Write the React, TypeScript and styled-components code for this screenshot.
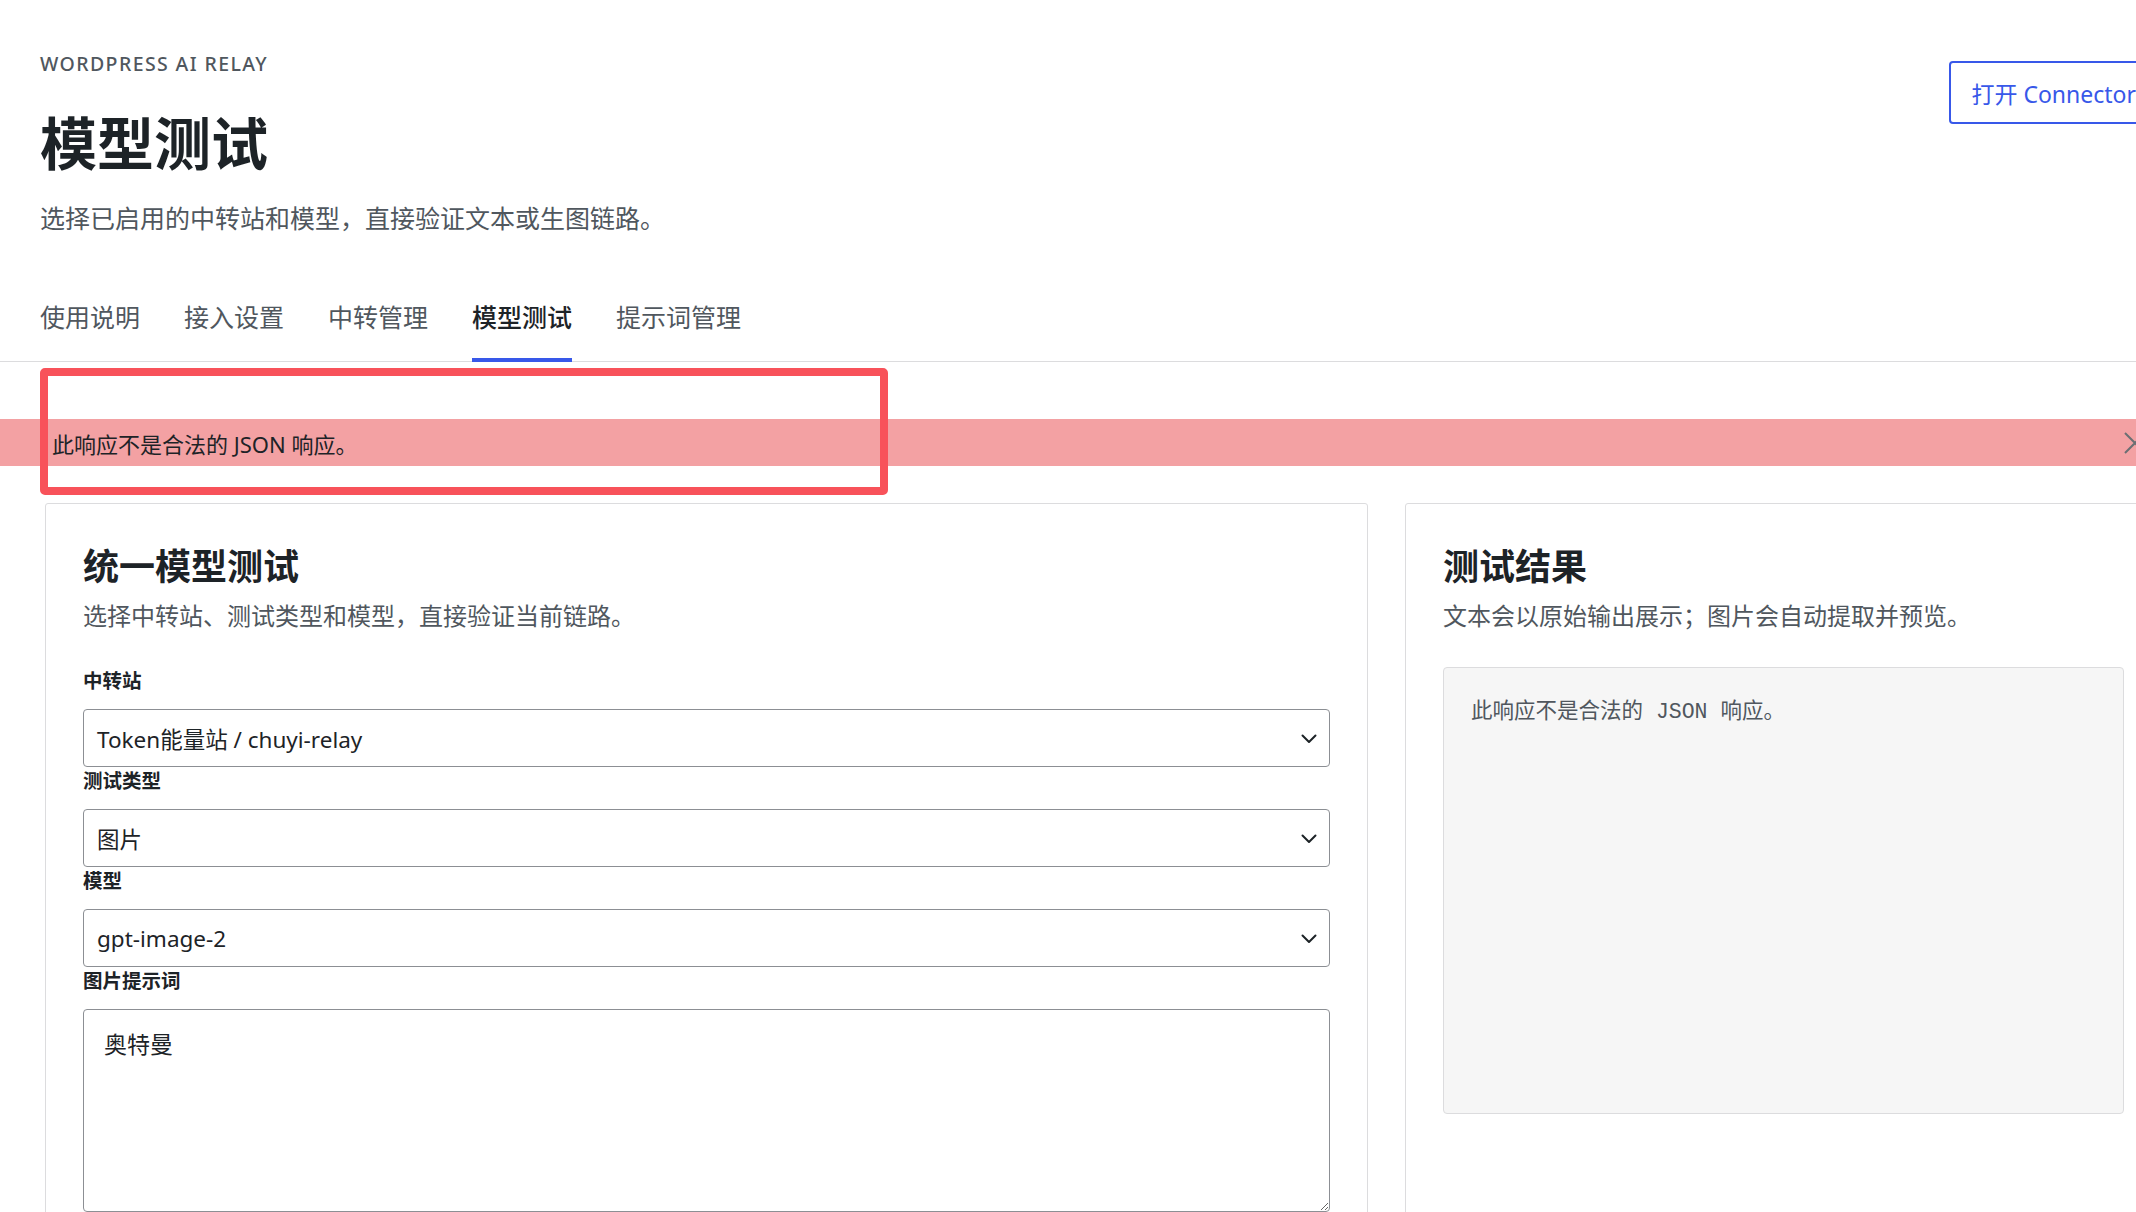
import React from "react";
import styled, { createGlobalStyle } from "styled-components";

const GlobalStyle = createGlobalStyle`
  html, body {
    margin: 0;
    padding: 0;
    background: #ffffff;
    overflow: hidden;
  }
  body {
    font-family: "Noto Sans", "Noto Sans CJK SC", sans-serif;
    color: #1d2327;
  }
  * {
    box-sizing: border-box;
  }
`;

const Page = styled.div`
  position: relative;
  width: 2200px;
  min-height: 1212px;
`;

const Header = styled.header`
  display: flex;
  justify-content: space-between;
  align-items: flex-start;
  padding: 52px 42px 0 40px;
`;

const HeaderText = styled.div`
  display: flex;
  flex-direction: column;
`;

const Eyebrow = styled.div`
  font-size: 19.5px;
  line-height: 24px;
  letter-spacing: 1.4px;
  font-weight: 500;
  color: #50575e;
  text-transform: uppercase;
`;

const Title = styled.h1`
  margin: 30px 0 0;
  font-family: "Noto Sans CJK SC", sans-serif;
  font-size: 57px;
  line-height: 68px;
  font-weight: 700;
  color: #1d2327;
`;

const Subtitle = styled.p`
  margin: 26px 0 0;
  font-size: 25px;
  line-height: 36px;
  color: #50575e;
`;

const OutlineButton = styled.button`
  margin-top: 9px;
  height: 63px;
  padding: 0 20px;
  background: #ffffff;
  border: 2px solid #3858e9;
  border-radius: 4px;
  color: #3858e9;
  font-family: "Noto Sans", "Noto Sans CJK SC", sans-serif;
  font-size: 23px;
  white-space: nowrap;
  cursor: pointer;
`;

const Tabs = styled.nav`
  display: flex;
  gap: 44px;
  margin-top: 64px;
  padding-left: 40px;
  border-bottom: 1px solid #dcdcde;
`;

const Tab = styled.a<{ active?: boolean }>`
  display: block;
  padding-bottom: 24px;
  font-size: 25px;
  line-height: 34px;
  color: ${(props) => (props.active ? "#1d2327" : "#50575e")};
  font-weight: ${(props) => (props.active ? 500 : 400)};
  border-bottom: 4px solid
    ${(props) => (props.active ? "#3858e9" : "transparent")};
  margin-bottom: -1px;
  text-decoration: none;
  cursor: pointer;
`;

const Notice = styled.div`
  display: flex;
  align-items: center;
  justify-content: space-between;
  margin-top: 57px;
  height: 47px;
  padding: 0 42px 0 52px;
  background: #f3a1a3;
  font-size: 22px;
  color: #1d2327;
`;

const Dismiss = styled.span`
  display: flex;
  color: #6b6f73;
  margin-right: 10px;
`;

const Highlight = styled.div`
  position: absolute;
  left: 40px;
  top: 368px;
  width: 848px;
  height: 127px;
  border: 8px solid #f8525a;
  border-radius: 5px;
  pointer-events: none;
`;

const Columns = styled.div`
  display: grid;
  grid-template-columns: 1323px 757px;
  gap: 37px;
  margin: 37px 0 0 45px;
  align-items: start;
`;

const Card = styled.section`
  background: #ffffff;
  border: 1px solid #dcdcde;
  border-radius: 3px;
  padding: 37px 37px 60px;
  min-height: 760px;
`;

const CardTitle = styled.h2`
  margin: 0;
  font-family: "Noto Sans CJK SC", sans-serif;
  font-size: 36px;
  line-height: 47px;
  font-weight: 700;
  color: #1d2327;
`;

const CardDesc = styled.p`
  margin: 11px 0 0;
  font-size: 24px;
  line-height: 34px;
  color: #50575e;
`;

const Form = styled.div`
  display: flex;
  flex-direction: column;
  margin-top: 34px;
`;

const Label = styled.label`
  display: block;
  font-size: 19.5px;
  line-height: 27px;
  font-weight: 600;
  color: #1d2327;
  margin-bottom: 15px;
`;

const SelectBox = styled.div`
  position: relative;
  display: flex;
  align-items: center;
  height: 58px;
  padding: 0 48px 0 13px;
  border: 1px solid #8c8f94;
  border-radius: 4px;
  background: #ffffff;
  font-size: 22.5px;
  color: #1d2327;
`;

const Chevron = styled.svg`
  position: absolute;
  right: 12px;
  top: 50%;
  margin-top: -7px;
`;

const TextArea = styled.textarea`
  display: block;
  width: 100%;
  height: 203px;
  padding: 18px 20px;
  border: 1px solid #8c8f94;
  border-radius: 4px;
  font-family: "Noto Sans", "Noto Sans CJK SC", sans-serif;
  font-size: 23px;
  line-height: 32px;
  color: #1d2327;
  resize: vertical;
`;

const ResultBox = styled.pre`
  margin: 34px 0 0;
  height: 447px;
  padding: 28px 27px;
  background: #f6f6f6;
  border: 1px solid #dcdcde;
  border-radius: 4px;
  font-family: "Liberation Mono", "Noto Sans CJK SC", monospace;
  font-size: 21.5px;
  line-height: 32px;
  color: #50575e;
  white-space: pre-wrap;
`;

const Select = ({ value }: { value: string }) => (
  <SelectBox>
    {value}
    <Chevron width="16" height="16" viewBox="0 0 16 16" fill="none">
      <path
        d="M1.5 4.5 L8 11 L14.5 4.5"
        stroke="#1d2327"
        strokeWidth="2"
        strokeLinecap="round"
        strokeLinejoin="round"
      />
    </Chevron>
  </SelectBox>
);

const Field = ({ label, children }: { label: string; children: React.ReactNode }) => (
  <div>
    <Label>{label}</Label>
    {children}
  </div>
);

const tabs = ["使用说明", "接入设置", "中转管理", "模型测试", "提示词管理"];

export default function App() {
  const errorText = "此响应不是合法的 JSON 响应。";
  return (
    <Page>
      <GlobalStyle />
      <Header>
        <HeaderText>
          <Eyebrow>WordPress AI Relay</Eyebrow>
          <Title>模型测试</Title>
          <Subtitle>选择已启用的中转站和模型，直接验证文本或生图链路。</Subtitle>
        </HeaderText>
        <OutlineButton>打开 Connector</OutlineButton>
      </Header>

      <Tabs>
        {tabs.map((t) => (
          <Tab key={t} active={t === "模型测试"}>
            {t}
          </Tab>
        ))}
      </Tabs>

      <Notice>
        <span>{errorText}</span>
        <Dismiss>
          <svg width="26" height="26" viewBox="0 0 26 26" fill="none">
            <path d="M3 3 L23 23 M23 3 L3 23" stroke="#6b6f73" strokeWidth="2" />
          </svg>
        </Dismiss>
      </Notice>

      <Columns>
        <Card>
          <CardTitle>统一模型测试</CardTitle>
          <CardDesc>选择中转站、测试类型和模型，直接验证当前链路。</CardDesc>
          <Form>
            <Field label="中转站">
              <Select value="Token能量站 / chuyi-relay" />
            </Field>
            <Field label="测试类型">
              <Select value="图片" />
            </Field>
            <Field label="模型">
              <Select value="gpt-image-2" />
            </Field>
            <Field label="图片提示词">
              <TextArea defaultValue="奥特曼" />
            </Field>
          </Form>
        </Card>
        <Card>
          <CardTitle>测试结果</CardTitle>
          <CardDesc>文本会以原始输出展示；图片会自动提取并预览。</CardDesc>
          <ResultBox>{errorText}</ResultBox>
        </Card>
      </Columns>

      <Highlight />
    </Page>
  );
}
